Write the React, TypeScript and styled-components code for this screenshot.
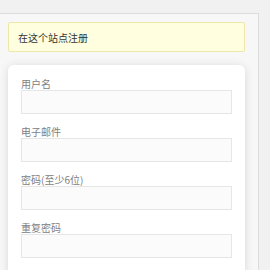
import React from "react";
import styled, { createGlobalStyle } from "styled-components";

const GlobalStyle = createGlobalStyle`
  html, body {
    margin: 0;
    padding: 0;
    background: #f1f1f1;
  }
  body {
    font-family: "Noto Sans CJK SC", "Noto Sans", "Liberation Sans", sans-serif;
    -webkit-font-smoothing: antialiased;
  }
`;

const Wrapper = styled.div`
  width: 270px;
  height: 270px;
  overflow: hidden;
  padding-top: 13px;
  box-sizing: border-box;
`;

const Panel = styled.div`
  width: 259px;
  height: 300px;
  box-sizing: border-box;
  border-top: 1px solid #dcdcdc;
  border-right: 1px solid #dcdcdc;
  background: #f7f7f7;
  padding: 8px 13px 0 8px;
`;

const Notice = styled.div`
  height: 30px;
  box-sizing: border-box;
  background: #ffffe0;
  border: 1px solid #ede8a8;
  border-radius: 2px;
  padding: 0 9px;
  display: flex;
  align-items: center;
  font-size: 10px;
  color: #333;
`;

const Card = styled.form`
  margin-top: 13px;
  background: #fff;
  border-radius: 6px;
  box-shadow: 0 1px 9px rgba(0, 0, 0, 0.13);
  padding: 12px 13px 20px;
  display: flex;
  flex-direction: column;
  gap: 11px;
`;

const Field = styled.div`
  display: flex;
  flex-direction: column;
`;

const Label = styled.label`
  font-size: 10px;
  line-height: 13px;
  color: #808080;
`;

const Input = styled.input`
  height: 24px;
  width: 100%;
  box-sizing: border-box;
  background: #fbfbfb;
  border: 1px solid #e6e6e6;
  margin: 0;
  padding: 2px 4px;
  font-size: 12px;
  outline: none;
`;

const fields = [
  { id: "user_login", label: "用户名", type: "text" },
  { id: "user_email", label: "电子邮件", type: "email" },
  { id: "pass1", label: "密码(至少6位)", type: "password" },
  { id: "pass2", label: "重复密码", type: "password" },
];

export default function App() {
  return (
    <Wrapper>
      <GlobalStyle />
      <Panel>
        <Notice>在这个站点注册</Notice>
        <Card onSubmit={(e) => e.preventDefault()}>
          {fields.map((f) => (
            <Field key={f.id}>
              <Label htmlFor={f.id}>{f.label}</Label>
              <Input id={f.id} type={f.type} />
            </Field>
          ))}
        </Card>
      </Panel>
    </Wrapper>
  );
}
